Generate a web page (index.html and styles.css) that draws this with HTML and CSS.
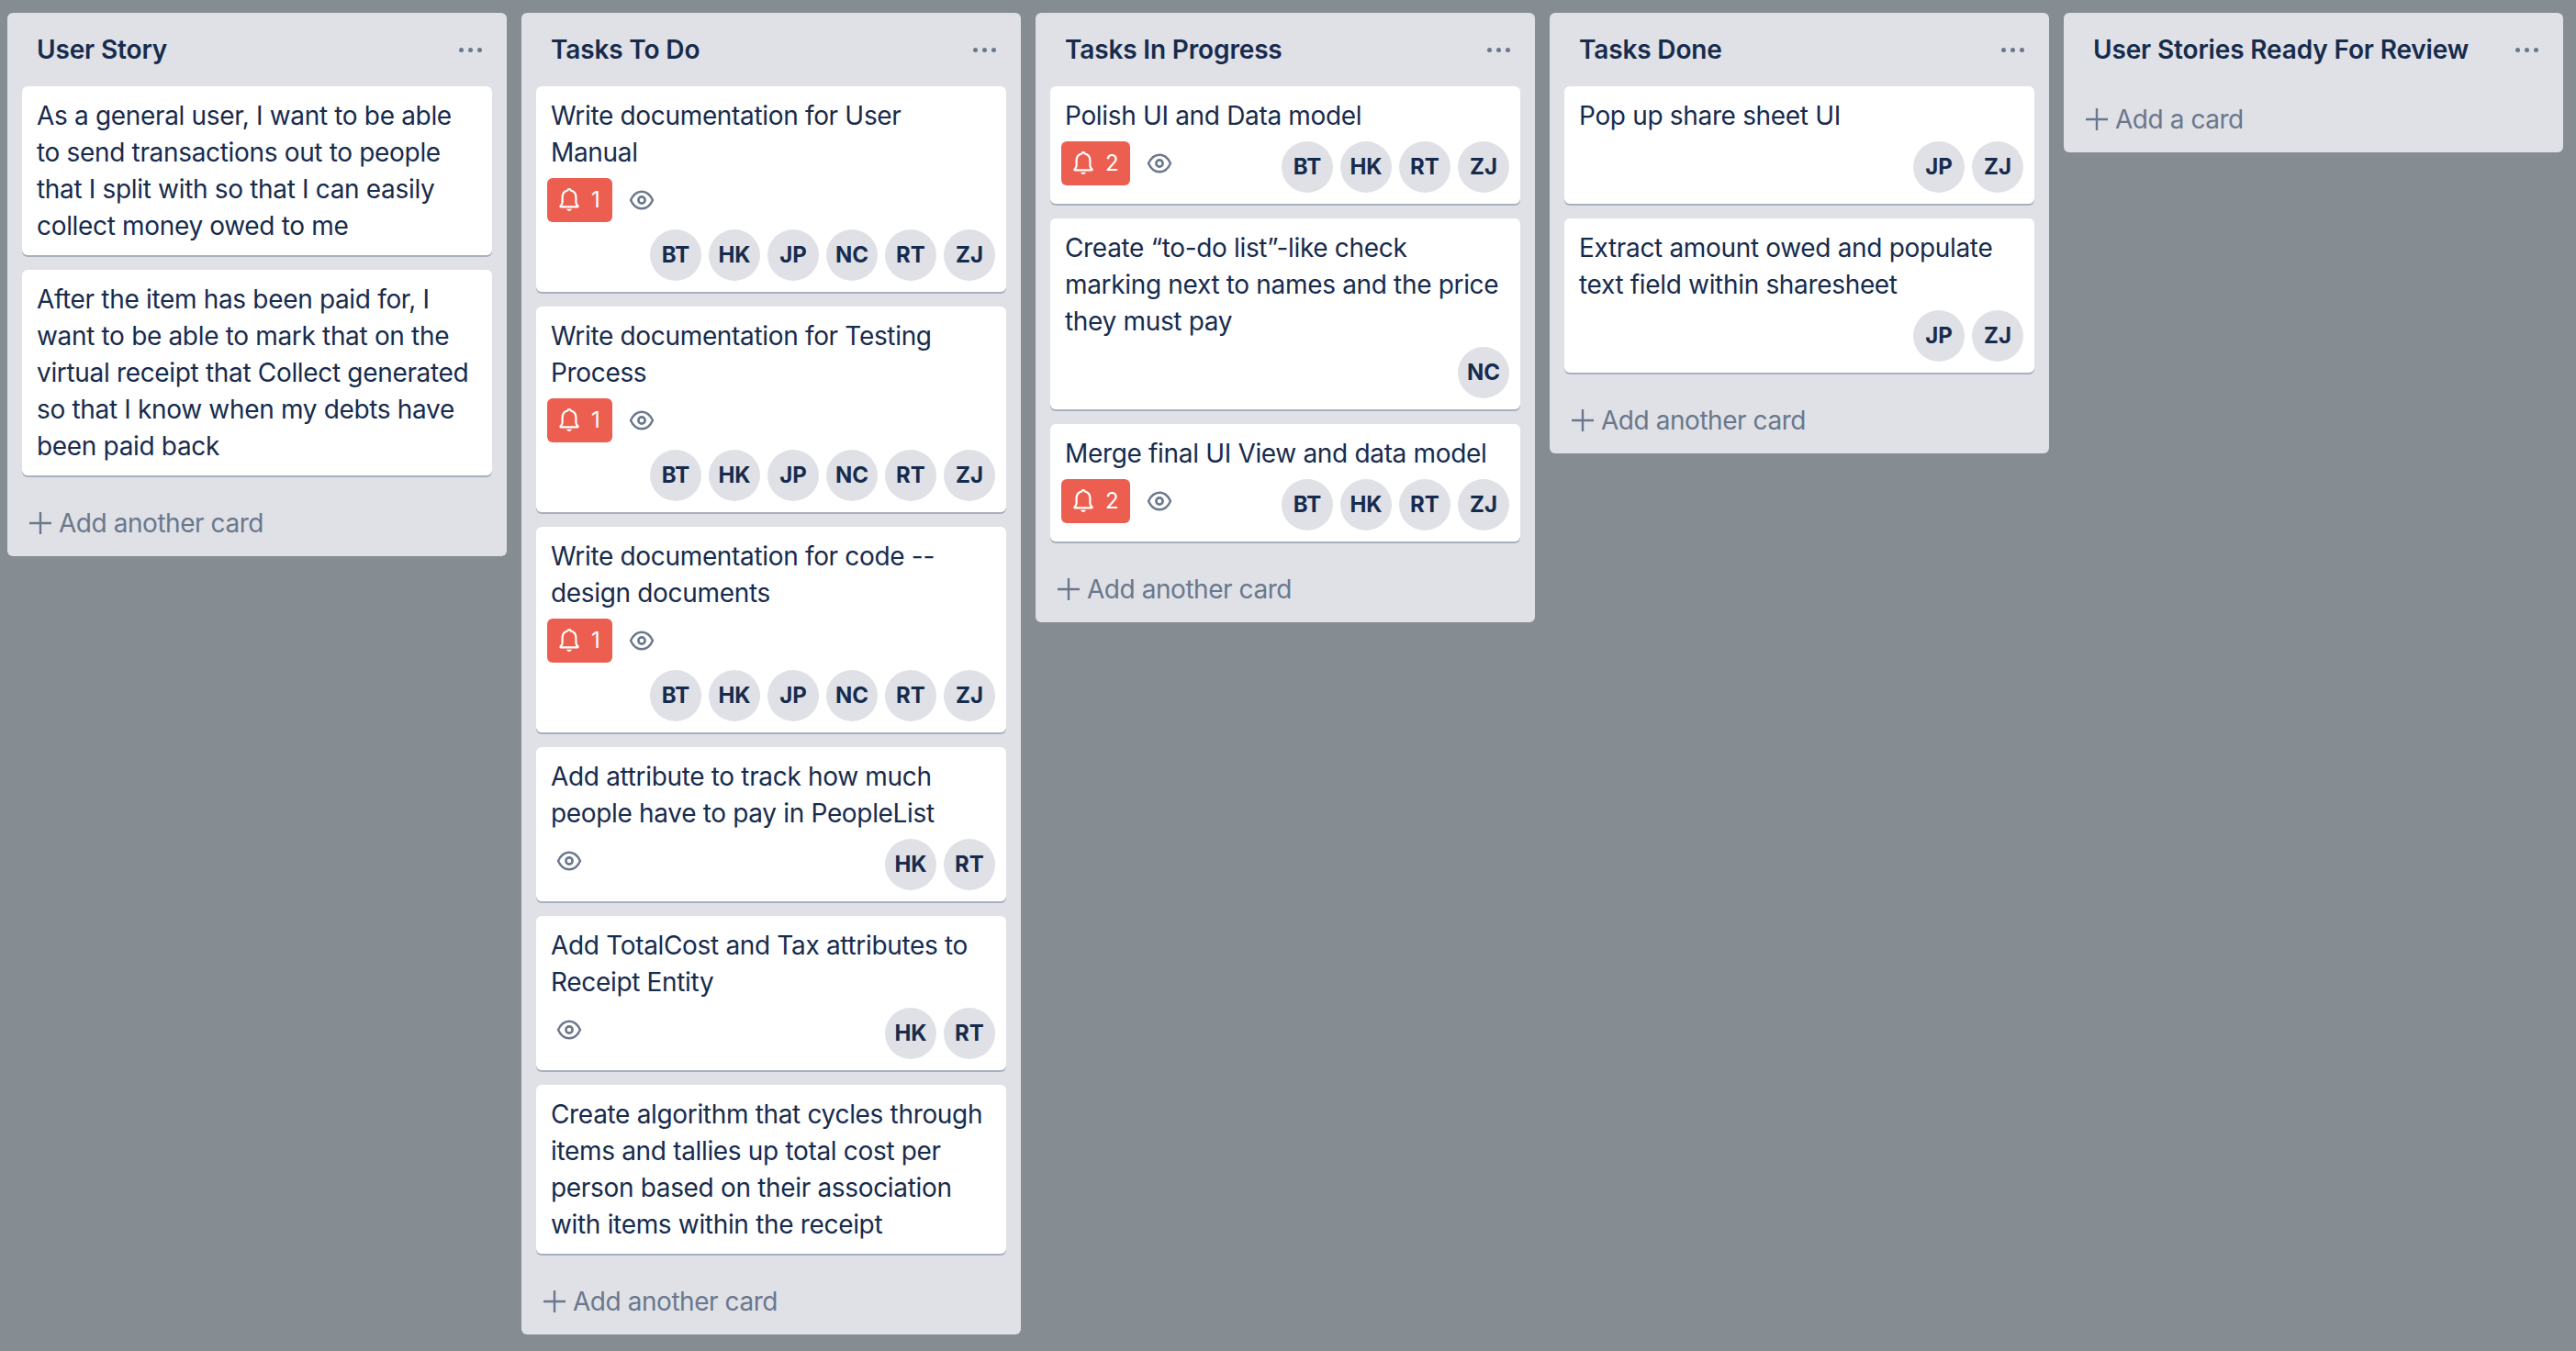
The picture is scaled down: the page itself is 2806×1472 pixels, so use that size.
FILE: index.html
```html
<!DOCTYPE html>
<html lang="en">
<head>
<meta charset="utf-8">
<title>Board</title>
<link rel="stylesheet" href="styles.css">
</head>
<body>
<svg class="defs" width="0" height="0" aria-hidden="true">
  <symbol id="bell" viewBox="0 0 24 28"><path d="M12 2c-1 0-1.600.6-1.700 1.500C6.700 4.300 4.600 7.200 4.600 11v5.400c0 1.600-.9 2.700-2 3.800-.5.5-.2 1.200.5 1.200h17.800c.7 0 1-.7.5-1.200-1.100-1.100-2-2.200-2-3.800V11c0-3.800-2.100-6.700-5.700-7.500C13.600 2.600 13 2 12 2z" fill="none" stroke="currentColor" stroke-width="2.200" stroke-linejoin="round"/><path d="M9.200 23.800h5.600c-.3 1.300-1.400 2.200-2.800 2.200s-2.500-.9-2.800-2.200z" fill="currentColor"/></symbol>
  <symbol id="eye" viewBox="0 0 28 24"><path d="M2 12c2.800-6.200 7-9.300 12-9.300S23.200 5.800 26 12c-2.800 6.200-7 9.300-12 9.300S4.800 18.200 2 12z" fill="none" stroke="currentColor" stroke-width="2.400" stroke-linejoin="round"/><circle cx="14" cy="12" r="3.600" fill="none" stroke="currentColor" stroke-width="2.600"/></symbol>
  <symbol id="plus" viewBox="0 0 24 24"><path d="M12 0v24M0 12h24" fill="none" stroke="currentColor" stroke-width="2.400"/></symbol>
</svg>
<main class="board">

<section class="list">
  <header class="list-head"><h2>User Story</h2><span class="dots"><i></i><i></i><i></i></span></header>
  <article class="card"><p>As a general user, I want to be able to send transactions out to people that I split with so that I can easily collect money owed to me</p></article>
  <article class="card"><p>After the item has been paid for, I want to be able to mark that on the virtual receipt that Collect generated so that I know when my debts have been paid back</p></article>
  <div class="add"><svg class="plus"><use href="#plus"/></svg>Add another card</div>
</section>

<section class="list">
  <header class="list-head"><h2>Tasks To Do</h2><span class="dots"><i></i><i></i><i></i></span></header>
  <article class="card"><p>Write documentation for User Manual</p>
    <div class="meta">
      <span class="badge"><svg class="bell"><use href="#bell"/></svg>1</span><svg class="eye"><use href="#eye"/></svg>
      <div class="people"><b>BT</b><b>HK</b><b>JP</b><b>NC</b><b>RT</b><b>ZJ</b></div>
    </div>
  </article>
  <article class="card"><p>Write documentation for Testing Process</p>
    <div class="meta">
      <span class="badge"><svg class="bell"><use href="#bell"/></svg>1</span><svg class="eye"><use href="#eye"/></svg>
      <div class="people"><b>BT</b><b>HK</b><b>JP</b><b>NC</b><b>RT</b><b>ZJ</b></div>
    </div>
  </article>
  <article class="card"><p>Write documentation for code -- design documents</p>
    <div class="meta">
      <span class="badge"><svg class="bell"><use href="#bell"/></svg>1</span><svg class="eye"><use href="#eye"/></svg>
      <div class="people"><b>BT</b><b>HK</b><b>JP</b><b>NC</b><b>RT</b><b>ZJ</b></div>
    </div>
  </article>
  <article class="card"><p>Add attribute to track how much people have to pay in PeopleList</p>
    <div class="meta">
      <svg class="eye solo"><use href="#eye"/></svg>
      <div class="people"><b>HK</b><b>RT</b></div>
    </div>
  </article>
  <article class="card"><p>Add TotalCost and Tax attributes to Receipt Entity</p>
    <div class="meta">
      <svg class="eye solo"><use href="#eye"/></svg>
      <div class="people"><b>HK</b><b>RT</b></div>
    </div>
  </article>
  <article class="card"><p>Create algorithm that cycles through items and tallies up total cost per person based on their association with items within the receipt</p></article>
  <div class="add"><svg class="plus"><use href="#plus"/></svg>Add another card</div>
</section>

<section class="list">
  <header class="list-head"><h2>Tasks In Progress</h2><span class="dots"><i></i><i></i><i></i></span></header>
  <article class="card"><p>Polish UI and Data model</p>
    <div class="meta">
      <span class="badge"><svg class="bell"><use href="#bell"/></svg>2</span><svg class="eye"><use href="#eye"/></svg>
      <div class="people"><b>BT</b><b>HK</b><b>RT</b><b>ZJ</b></div>
    </div>
  </article>
  <article class="card"><p>Create “to-do list”-like check marking next to names and the price they must pay</p>
    <div class="meta">
      <div class="people"><b>NC</b></div>
    </div>
  </article>
  <article class="card"><p>Merge final UI View and data model</p>
    <div class="meta">
      <span class="badge"><svg class="bell"><use href="#bell"/></svg>2</span><svg class="eye"><use href="#eye"/></svg>
      <div class="people"><b>BT</b><b>HK</b><b>RT</b><b>ZJ</b></div>
    </div>
  </article>
  <div class="add"><svg class="plus"><use href="#plus"/></svg>Add another card</div>
</section>

<section class="list">
  <header class="list-head"><h2>Tasks Done</h2><span class="dots"><i></i><i></i><i></i></span></header>
  <article class="card"><p>Pop up share sheet UI</p>
    <div class="meta">
      <div class="people"><b>JP</b><b>ZJ</b></div>
    </div>
  </article>
  <article class="card"><p>Extract amount owed and populate text field within sharesheet</p>
    <div class="meta">
      <div class="people"><b>JP</b><b>ZJ</b></div>
    </div>
  </article>
  <div class="add"><svg class="plus"><use href="#plus"/></svg>Add another card</div>
</section>

<section class="list">
  <header class="list-head"><h2>User Stories Ready For Review</h2><span class="dots"><i></i><i></i><i></i></span></header>
  <div class="add first"><svg class="plus"><use href="#plus"/></svg>Add a card</div>
</section>

</main>
</body>
</html>
```

FILE: styles.css
```css
* { box-sizing: border-box; }
html, body { height: 100%; }
body {
  margin: 0;
  background: #858c92;
  color: #172b4d;
  font-family: Inter, "Liberation Sans", sans-serif;
  font-size: 28px;
  line-height: 40px;
  letter-spacing: -.33px;
  overflow: hidden;
}
.defs { position: absolute; }
.board {
  display: flex;
  align-items: flex-start;
  gap: 16px;
  padding: 14px 8px;
}
.list {
  flex: 0 0 544px;
  background: #dfe1e6;
  border-radius: 6px;
  padding: 0 16px;
}
.list-head {
  height: 80px;
  padding: 0 0 0 16px;
  display: flex;
  align-items: center;
  justify-content: space-between;
}
.list-head h2 {
  margin: 0;
  font-size: 28px;
  font-weight: 600;
  line-height: 40px;
  letter-spacing: -.15px;
}
.dots { display: flex; gap: 5px; margin-right: 11px; }
.dots i { width: 5px; height: 5px; border-radius: 50%; background: #6b778c; }
.card {
  background: #fff;
  border-radius: 6px;
  box-shadow: 0 2px 0 rgba(9, 30, 66, .25);
  margin-bottom: 16px;
  padding: 12px 12px 12px 16px;
}
.card p { margin: 0; padding-right: 6px; }
.meta {
  display: flex;
  flex-wrap: wrap;
  align-items: flex-start;
  row-gap: 8px;
  margin: 8px 0 0 -4px;
}
.badge {
  display: flex;
  align-items: center;
  min-width: 71px;
  height: 48px;
  padding: 0 12px;
  border-radius: 6px;
  background: #ec5f50;
  color: #fff;
  font-size: 24px;
  letter-spacing: 0;
}
.bell { width: 24px; height: 28px; margin-right: 12px; flex: none; }
.eye { width: 28px; height: 24px; margin: 12px 0 0 18px; color: #6b778c; }
.eye.solo { margin-left: 10px; }
.people {
  display: flex;
  gap: 8px;
  margin-left: auto;
}
.people b {
  width: 56px;
  height: 56px;
  border-radius: 50%;
  background: #dfe1e6;
  font-size: 24px;
  font-weight: 700;
  line-height: 56px;
  text-align: center;
  letter-spacing: 0;
}
.add {
  display: flex;
  align-items: center;
  gap: 8px;
  height: 72px;
  margin-left: 8px;
  color: #6b778c;
  letter-spacing: -.45px;
}
.plus { width: 24px; height: 24px; flex: none; }
```
